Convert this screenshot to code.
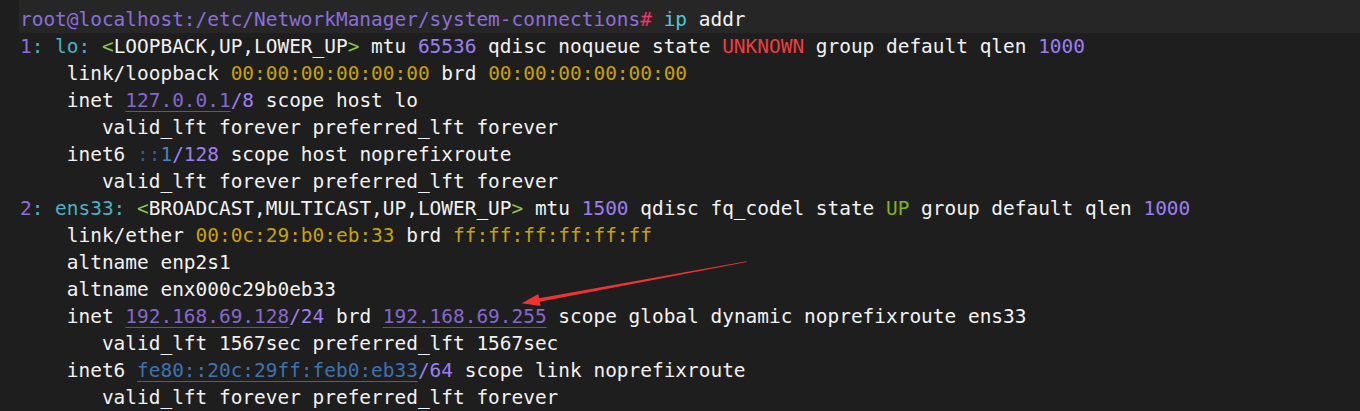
import React from 'react';

type Seg = [string, string?];

const W = 'text-[#f2f2f2]';
const PR = 'text-[#8b6fd8]';
const NUM = 'text-[#9d7ef2]';
const TEAL = 'text-[#4fb0c2]';
const GRN = 'text-[#8bc34a]';
const RED = 'text-[#f03c3c]';
const YEL = 'text-[#c9a200]';
const IP = 'text-[#8568cc] underline decoration-[#5e5e5e] decoration-1 underline-offset-[4px]';
const V6 = 'text-[#3f72b0] underline decoration-[#5e5e5e] decoration-1 underline-offset-[4px]';

const lines: Seg[][] = [
  [['1', PR], [':', TEAL], [' '], ['lo:', TEAL], [' '], ['<', GRN], ['LOOPBACK,UP,LOWER_UP'], ['>', GRN], [' mtu '], ['65536', NUM], [' qdisc noqueue state '], ['UNKNOWN', RED], [' group default qlen '], ['1000', NUM]],
  [['    link/loopback '], ['00:00:00:00:00:00', YEL], [' brd '], ['00:00:00:00:00:00', YEL]],
  [['    inet '], ['127.0.0.1', IP], ['/8', NUM], [' scope host lo']],
  [['       valid_lft forever preferred_lft forever']],
  [['    inet6 '], ['::', 'text-[#2f5d92]'], ['1', 'text-[#4a80c4]'], ['/128', NUM], [' scope host noprefixroute']],
  [['       valid_lft forever preferred_lft forever']],
  [['2', PR], [':', TEAL], [' '], ['ens33:', TEAL], [' '], ['<', GRN], ['BROADCAST,MULTICAST,UP,LOWER_UP'], ['>', GRN], [' mtu '], ['1500', NUM], [' qdisc fq_codel state '], ['UP', 'text-[#7fb51e]'], [' group default qlen '], ['1000', NUM]],
  [['    link/ether '], ['00:0c:29:b0:eb:33', YEL], [' brd '], ['ff:ff:ff:ff:ff:ff', YEL]],
  [['    altname enp2s1']],
  [['    altname enx000c29b0eb33']],
  [['    inet '], ['192.168.69.128', IP], ['/24', NUM], [' brd '], ['192.168.69.255', IP], [' scope global dynamic noprefixroute ens33']],
  [['       valid_lft 1567sec preferred_lft 1567sec']],
  [['    inet6 '], ['fe80::20c:29ff:feb0:eb33', V6], ['/64', NUM], [' scope link noprefixroute']],
  [['       valid_lft forever preferred_lft forever']],
];

const Line: React.FC<{ segs: Seg[] }> = ({ segs }) => (
  <div className="h-[27px] leading-[27px] whitespace-pre">
    {segs.map(([t, c], i) => (
      <span key={i} className={c ?? W}>
        {t}
      </span>
    ))}
  </div>
);

export default function App() {
  return (
    <div
      className="relative w-[1360px] h-[411px] overflow-hidden bg-[#1e1e1e] text-[19.45px] text-[#f2f2f2]"
      style={{ fontFamily: '"DejaVu Sans Mono", "Liberation Mono", monospace' }}
    >
      <div className="pl-[19px]">
        <div className="h-[33px] pt-[6px] pl-[1px] bg-[#262626]">
          {/* previous prompt, scrolled almost out of view */}
          <div className="-mt-[31px] mb-[4px] h-[27px] leading-[27px] whitespace-pre">
            <span className={PR}>root@localhost:/etc/NetworkManager/system-connections</span>
            <span className="text-[#f0356a]">#</span>
          </div>
          <div className="h-[27px] leading-[27px] whitespace-pre">
            <span className={PR}>root@localhost:/etc/NetworkManager/system-connections</span>
            <span className="text-[#f0356a]">#</span>
            <span> </span>
            <span className="text-[#52c6dc]">ip</span>
            <span className={W}> addr</span>
          </div>
        </div>
        <div className="pl-[1px]">
          {lines.map((segs, i) => (
            <Line key={i} segs={segs} />
          ))}
        </div>
      </div>
      <svg className="absolute inset-0 pointer-events-none" width="1360" height="411" viewBox="0 0 1360 411">
        <path
          d="M521.7 303.3 L538.3 294.1 L539.1 298.2 L746.6 261.3 L746.8 262.1 L539.7 301.8 L540.5 305.9 Z"
          fill="#ee3333"
        />
      </svg>
    </div>
  );
}
